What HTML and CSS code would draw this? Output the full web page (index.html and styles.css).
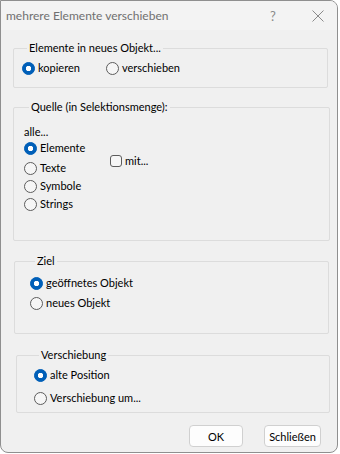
FILE: index.html
```html
<!DOCTYPE html>
<html lang="de">
<head>
    <meta charset="UTF-8">
    <title>mehrere Elemente verschieben</title>
    <link rel="stylesheet" href="styles.css">
</head>
<body>
    <div class="dialog">
        <div class="titlebar">
            <span class="title">mehrere Elemente verschieben</span>
            <span class="help">?</span>
            <span class="close">
                <svg width="12" height="12" viewBox="0 0 12 12">
                    <path d="M0.5 0.5 L11.5 11.5 M11.5 0.5 L0.5 11.5" stroke="#8a8a8a" stroke-width="1" fill="none"/>
                </svg>
            </span>
        </div>

        <div class="group group-copy">
            <div class="legend">Elemente in neues Objekt...</div>
            <div class="row">
                <label class="option option-copy"><span class="radio checked"></span>kopieren</label>
                <label class="option"><span class="radio"></span>verschieben</label>
            </div>
        </div>

        <div class="group group-source">
            <div class="legend">Quelle (in Selektionsmenge):</div>
            <div class="caption">alle...</div>
            <div class="source-body">
                <div class="stack">
                    <label class="option"><span class="radio checked"></span>Elemente</label>
                    <label class="option gap-texte"><span class="radio"></span>Texte</label>
                    <label class="option"><span class="radio"></span>Symbole</label>
                    <label class="option"><span class="radio"></span>Strings</label>
                </div>
                <label class="option check-with"><span class="checkbox"></span>mit...</label>
            </div>
        </div>

        <div class="group group-target">
            <div class="legend">Ziel</div>
            <div class="stack">
                <label class="option"><span class="radio checked"></span>geöffnetes Objekt</label>
                <label class="option"><span class="radio"></span>neues Objekt</label>
            </div>
        </div>

        <div class="group group-offset">
            <div class="legend">Verschiebung</div>
            <div class="stack">
                <label class="option"><span class="radio checked"></span>alte Position</label>
                <label class="option"><span class="radio"></span>Verschiebung um...</label>
            </div>
        </div>

        <div class="buttons">
            <button class="btn btn-ok">OK</button>
            <button class="btn btn-close">Schließen</button>
        </div>
    </div>
</body>
</html>
```

FILE: styles.css
```css
* {
    margin: 0;
    padding: 0;
    box-sizing: border-box;
}

body {
    font-family: Lato, "Noto Sans", sans-serif;
    font-size: 11px;
    line-height: 16px;
    color: #000;
    background-color: #ffffff;
}

.dialog {
    width: 338px;
    height: 453px;
    background-color: #f0f0f0;
    border: 1px solid #8f8f8f;
    border-radius: 0 8px 8px 8px;
    overflow: hidden;
}

.titlebar {
    display: flex;
    align-items: center;
    height: 29px;
    padding-left: 5px;
    background-color: #f3f3f3;
    color: #707070;
    font-size: 12px;
}

.title {
    flex: 1;
}

.help {
    width: 12px;
    margin-right: 30px;
    font-size: 13px;
    color: #8a8a8a;
}

.close {
    display: flex;
    margin-right: 13px;
}

/* group boxes */
.group {
    border: 1px solid #dcdcdc;
    border-radius: 2px;
}

.legend {
    width: fit-content;
    margin: -9px 0 0 5px;
    padding: 0 2px;
    background-color: #f0f0f0;
}

.group-copy {
    margin: 18px 0 0 12px;
    width: 315px;
    height: 40px;
    padding-left: 8px;
}

.group-copy .row {
    display: flex;
    margin-top: 4px;
}

.option-copy {
    width: 84px;
}

.group-source {
    margin: 19px 0 0 12px;
    width: 317px;
    height: 134px;
    padding-left: 10px;
}

.caption {
    margin-top: 9px;
}

.source-body {
    display: flex;
}

.source-body .stack {
    width: 86px;
    gap: 2px;
}

.gap-texte {
    margin-top: 2px;
}

.check-with {
    margin-top: 13px;
    align-self: flex-start;
}

.group-target {
    margin: 20px 0 0 13px;
    width: 315px;
    height: 73px;
    padding-left: 15px;
}

.group-target .stack {
    margin-top: 6px;
    gap: 4px;
}

.group-offset {
    margin: 21px 0 0 15px;
    width: 314px;
    height: 58px;
    padding-left: 17px;
}

.group-offset .stack {
    margin-top: 4px;
    gap: 7px;
}

.stack {
    display: flex;
    flex-direction: column;
}

.option {
    display: flex;
    align-items: center;
    height: 16px;
    white-space: nowrap;
}

.radio {
    flex: none;
    width: 13px;
    height: 13px;
    margin-right: 3px;
    border: 1px solid #5c5c5c;
    border-radius: 50%;
    background-color: #f6f6f6;
}

.radio.checked {
    border-color: #005fb8;
    background-color: #005fb8;
    background-image: radial-gradient(circle, #ffffff 0, #ffffff 2.4px, transparent 3px);
}

.checkbox {
    flex: none;
    width: 12px;
    height: 12px;
    margin-right: 3px;
    border: 1px solid #5c5c5c;
    border-radius: 3px;
    background-color: #f6f6f6;
}

/* bottom buttons */
.buttons {
    display: flex;
    gap: 21px;
    margin: 12px 0 0 188px;
}

.btn {
    height: 22px;
    font-family: inherit;
    font-size: 11px;
    background-color: #fdfdfd;
    border: 1px solid #d0d0d0;
    border-radius: 4px;
    color: #000;
}

.btn-ok {
    width: 54px;
}

.btn-close {
    width: 57px;
}
```
